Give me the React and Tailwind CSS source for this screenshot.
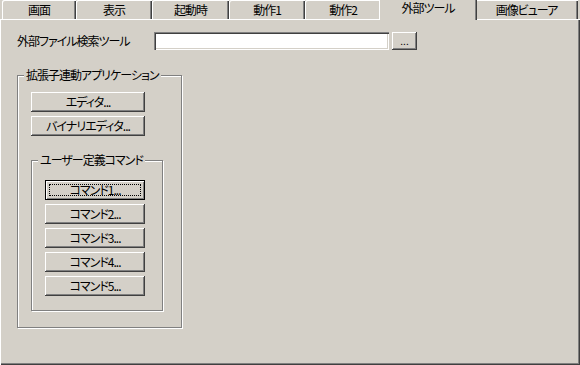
import React from 'react';

const tabs = [
  { label: '画面', w: 74 },
  { label: '表示', w: 76 },
  { label: '起動時', w: 77 },
  { label: '動作1', w: 76 },
  { label: '動作2', w: 76 },
  { label: '外部ツール', w: 94, active: true },
  { label: '画像ビューア', w: 103 },
];

const Btn = ({ children, width, focused }) => (
  <div
    className={
      focused
        ? 'relative flex items-center justify-center h-[20px] bg-[#d4d0c8] shadow-[inset_1px_1px_#000,inset_-1px_-1px_#000,inset_2px_2px_#ffffff,inset_-2px_-2px_#808080]'
        : 'relative flex items-center justify-center h-[20px] bg-[#d4d0c8] shadow-[inset_-1px_-1px_#404040,inset_1px_1px_#ffffff,inset_-2px_-2px_#808080]'
    }
    style={{ width }}
  >
    {focused && <div className="absolute inset-x-[4px] inset-y-[4px] border border-dotted border-black" />}
    <span className="relative">{children}</span>
  </div>
);

const GroupBox = ({ title, className, children }) => (
  <div className={'relative border border-[#808080] shadow-[inset_1px_1px_#ffffff,1px_1px_#ffffff] ' + className}>
    <span className="absolute -top-[8px] left-[6px] px-[2px] bg-[#d4d0c8] leading-[14px]">{title}</span>
    {children}
  </div>
);

const App = () => {
  return (
    <div className="w-[580px] h-[365px] bg-[#d4d0c8] text-black text-[12px] leading-[14px] tracking-[-1px] font-['Noto_Sans_CJK_JP','Noto_Sans',sans-serif] [font-feature-settings:'palt'] overflow-hidden">
      {/* tab strip */}
      <div className="flex h-[19px] pl-[2px] items-start">
        {tabs.map((t) =>
          t.active ? (
            <div
              key={t.label}
              className="relative z-10 -mx-[2px] h-[20px] flex justify-center pt-[1px] bg-[#d4d0c8] shadow-[inset_1px_0_#ffffff,inset_-1px_0_#404040,inset_-2px_0_#808080]"
              style={{ width: t.w + 4 }}
            >
              {t.label}
            </div>
          ) : (
            <div
              key={t.label}
              className="h-[19px] flex justify-center pt-[3px] bg-[#d4d0c8] rounded-tl-[2px] shadow-[inset_1px_1px_#ffffff,inset_-1px_0_#404040,inset_-2px_0_#808080]"
              style={{ width: t.w }}
            >
              {t.label}
            </div>
          )
        )}
      </div>

      {/* panel */}
      <div className="h-[346px] flex flex-col pt-[13px] pl-[17px] shadow-[inset_1px_1px_#ffffff,inset_-1px_-1px_#404040,inset_-2px_-2px_#808080]">
        <div className="flex items-center h-[18px]">
          <span className="w-[137px]">外部ファイル検索ツール</span>
          <div className="w-[235px] h-[18px] bg-white shadow-[inset_1px_1px_#808080,inset_2px_2px_#404040,inset_-1px_-1px_#ffffff,inset_-2px_-2px_#d4d0c8]" />
          <div className="ml-[3px] w-[25px] h-[18px] flex items-center justify-center bg-[#d4d0c8] shadow-[inset_-1px_-1px_#404040,inset_1px_1px_#ffffff,inset_-2px_-2px_#808080] text-[10px] tracking-normal">
            ...
          </div>
        </div>

        <GroupBox title="拡張子連動アプリケーション" className="mt-[25px] w-[165px] h-[253px]">
          <div className="flex flex-col pl-[13px] pt-[16px] gap-[4px]">
            <Btn width={114}>エディタ...</Btn>
            <Btn width={114}>バイナリエディタ...</Btn>
            <GroupBox title="ユーザー定義コマンド" className="mt-[20px] w-[132px] h-[151px]">
              <div className="flex flex-col pl-[13px] pt-[19px] gap-[4px]">
                <Btn width={100} focused>コマンド1...</Btn>
                <Btn width={100}>コマンド2...</Btn>
                <Btn width={100}>コマンド3...</Btn>
                <Btn width={100}>コマンド4...</Btn>
                <Btn width={100}>コマンド5...</Btn>
              </div>
            </GroupBox>
          </div>
        </GroupBox>
      </div>
    </div>
  );
};

export default App;
